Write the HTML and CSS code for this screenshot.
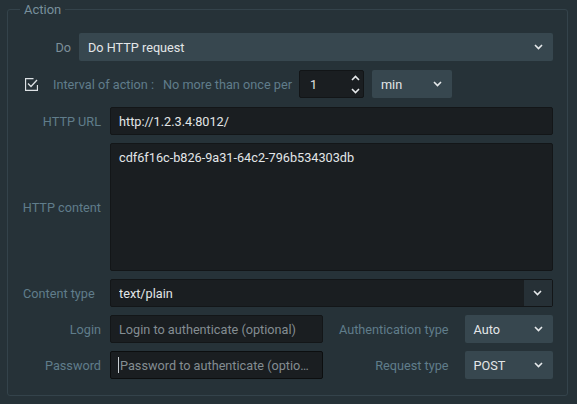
FILE: index.html
```html
<!DOCTYPE html>
<html lang="en">
<head>
    <meta charset="UTF-8">
    <meta name="viewport" content="width=device-width, initial-scale=1.0">
    <title>Action</title>
    <link rel="stylesheet" href="styles.css">
</head>
<body>
    <fieldset class="group">
        <legend>Action</legend>

        <div class="row-do">
            <label class="lbl lbl-do">Do</label>
            <div class="combo">
                <span>Do HTTP request</span>
                <svg class="chev" width="9" height="6" viewBox="0 0 9 6"><polyline points="1,1 4.5,4.5 8,1"/></svg>
            </div>
        </div>

        <div class="row-interval">
            <svg class="check" width="13" height="13" viewBox="0 0 13 13">
                <path class="box" d="M8.5 0.5H0.5V12.5H12.5V7"/>
                <polyline class="tick" points="3,5.5 6,8.5 12,2"/>
            </svg>
            <span class="lbl">Interval of action :</span>
            <span class="lbl">No more than once per</span>
            <div class="spin">
                <span>1</span>
                <div class="arrows">
                    <svg width="9" height="6" viewBox="0 0 9 6"><polyline points="1,5 4.5,1.5 8,5"/></svg>
                    <svg width="9" height="6" viewBox="0 0 9 6"><polyline points="1,1 4.5,4.5 8,1"/></svg>
                </div>
            </div>
            <div class="combo unit">
                <span>min</span>
                <svg class="chev" width="9" height="6" viewBox="0 0 9 6"><polyline points="1,1 4.5,4.5 8,1"/></svg>
            </div>
        </div>

        <div class="form">
            <label class="lbl">HTTP URL</label>
            <input class="field" type="text" value="http://1.2.3.4:8012/">

            <label class="lbl">HTTP content</label>
            <textarea class="field area">cdf6f16c-b826-9a31-64c2-796b534303db</textarea>

            <label class="lbl lbl-left">Content type</label>
            <div class="edit-combo">
                <input class="field" type="text" value="text/plain">
                <span class="drop">
                    <svg class="chev" width="9" height="6" viewBox="0 0 9 6"><polyline points="1,1 4.5,4.5 8,1"/></svg>
                </span>
            </div>

            <label class="lbl">Login</label>
            <div class="pair">
                <input class="field" type="text" placeholder="Login to authenticate (optional)">
                <label class="lbl">Authentication type</label>
                <div class="combo">
                    <span>Auto</span>
                    <svg class="chev" width="9" height="6" viewBox="0 0 9 6"><polyline points="1,1 4.5,4.5 8,1"/></svg>
                </div>
            </div>

            <label class="lbl">Password</label>
            <div class="pair">
                <div class="focus-wrap">
                    <input class="field focused" type="password" placeholder="Password to authenticate (optional)">
                    <span class="caret"></span>
                </div>
                <label class="lbl">Request type</label>
                <div class="combo">
                    <span>POST</span>
                    <svg class="chev" width="9" height="6" viewBox="0 0 9 6"><polyline points="1,1 4.5,4.5 8,1"/></svg>
                </div>
            </div>
        </div>
    </fieldset>
</body>
</html>
```

FILE: styles.css
```css
body {
    margin: 0;
    background-color: #263238;
    font-family: Roboto, "Liberation Sans", sans-serif;
    font-size: 12.7px;
    color: #e0e0e0;
}
.group {
    margin: 2px 10px 0 7px;
    height: 394px;
    box-sizing: border-box;
    padding: 16px 14px 16px 0;
    border: 1px solid #34434b;
    border-radius: 3px;
}
.group legend {
    margin-left: 12px;
    padding: 0 4px;
    color: #78909c;
    line-height: 15px;
    font-size: 13px;
}
.lbl {
    color: #607d8b;
    white-space: nowrap;
}
.lbl-do {
    color: #7d8f99;
}
.combo {
    height: 28px;
    box-sizing: border-box;
    display: flex;
    align-items: center;
    justify-content: space-between;
    padding: 0 10px 0 9px;
    background-color: #37474f;
    border-radius: 2px;
    color: #e3e6e8;
}
.chev polyline,
.arrows polyline {
    fill: none;
    stroke: #e6e9eb;
    stroke-width: 1.6;
}
.row-do {
    display: flex;
    align-items: center;
    gap: 8px;
}
.row-do .lbl {
    width: 63px;
    text-align: right;
}
.row-do .combo {
    flex: 1;
}
.row-interval {
    display: flex;
    align-items: center;
    margin-top: 9px;
    padding-left: 17px;
}
.check {
    margin-right: 15px;
}
.check .box,
.check .tick {
    fill: none;
    stroke: #dde2e5;
    stroke-width: 1.3;
}
.row-interval .lbl + .lbl {
    margin-left: 9px;
}
.spin {
    margin-left: 7px;
    width: 65px;
    height: 28px;
    box-sizing: border-box;
    display: flex;
    align-items: center;
    justify-content: space-between;
    padding: 0 3px 0 10px;
    background-color: #1a1e21;
    border: 1px solid #121517;
    border-radius: 2px;
}
.arrows {
    display: flex;
    flex-direction: column;
    gap: 7px;
}
.arrows svg {
    display: block;
}
.unit {
    margin-left: 8px;
    width: 80px;
}
.form {
    margin-top: 9px;
    display: grid;
    grid-template-columns: 93px 1fr;
    column-gap: 9px;
    row-gap: 8px;
    align-items: center;
}
.form > .lbl {
    text-align: right;
}
.form > .lbl-left {
    text-align: left;
    padding-left: 15px;
}
.field {
    height: 28px;
    box-sizing: border-box;
    width: 100%;
    margin: 0;
    padding: 0 8px;
    background-color: #1a1e21;
    border: 1px solid #131618;
    border-radius: 2px;
    font-family: inherit;
    font-size: 12.7px;
    color: #e3e6e8;
    outline: none;
}
.field::placeholder {
    color: #848d92;
    text-overflow: ellipsis;
}
.area {
    height: 128px;
    padding-top: 6px;
    resize: none;
    line-height: 16px;
}
.edit-combo {
    display: flex;
    height: 28px;
    border: 1px solid #131618;
    border-radius: 2px;
    box-sizing: border-box;
    background-color: #1a1e21;
}
.edit-combo .field {
    flex: 1;
    height: 26px;
    border: none;
}
.drop {
    width: 28px;
    display: flex;
    align-items: center;
    justify-content: center;
    background-color: #263036;
}
.pair {
    display: grid;
    grid-template-columns: 213px 1fr 88px;
    column-gap: 16px;
    align-items: center;
}
.pair > .lbl {
    text-align: right;
}
.focus-wrap {
    position: relative;
}
.focused {
    border-color: #0c0e0f;
    text-overflow: ellipsis;
    padding-left: 9px;
}
.caret {
    position: absolute;
    left: 8px;
    top: 6px;
    width: 1px;
    height: 16px;
    background-color: #c8ced2;
}
```
